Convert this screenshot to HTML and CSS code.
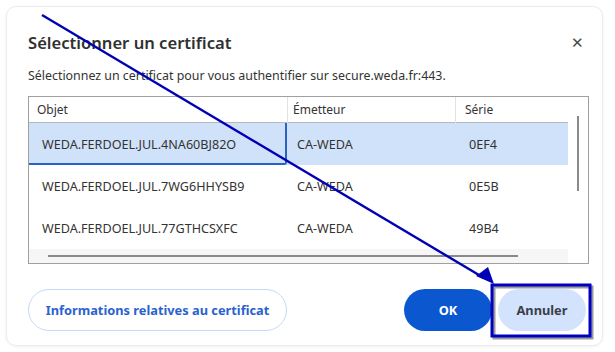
FILE: index.html
```html
<!DOCTYPE html>
<html lang="fr">
<head>
  <meta charset="UTF-8" />
  <title>Sélectionner un certificat</title>
  <link rel="stylesheet" href="styles.css">
</head>
<body>

  <!-- DIALOG -->
  <div class="dialog">
    <div class="dialog-head">
      <h1>Sélectionner un certificat</h1>
      <span class="close">&#x2715;</span>
    </div>
    <p class="intro">Sélectionnez un certificat pour vous authentifier sur secure.weda.fr:443.</p>

    <!-- CERTIFICATE LIST -->
    <div class="cert-list">
      <div class="cert-body">
        <div class="row head">
          <div class="cell">Objet</div>
          <div class="cell">Émetteur</div>
          <div class="cell">Série</div>
        </div>
        <div class="row selected">
          <div class="cell focus">WEDA.FERDOEL.JUL.4NA60BJ82O</div>
          <div class="cell">CA-WEDA</div>
          <div class="cell">0EF4</div>
        </div>
        <div class="row">
          <div class="cell">WEDA.FERDOEL.JUL.7WG6HHYSB9</div>
          <div class="cell">CA-WEDA</div>
          <div class="cell">0E5B</div>
        </div>
        <div class="row">
          <div class="cell">WEDA.FERDOEL.JUL.77GTHCSXFC</div>
          <div class="cell">CA-WEDA</div>
          <div class="cell">49B4</div>
        </div>
        <div class="hscroll"><span></span></div>
      </div>
      <div class="vscroll"><span></span></div>
    </div>

    <!-- ACTIONS -->
    <div class="actions">
      <button class="btn btn-outline">Informations relatives au certificat</button>
      <div class="actions-right">
        <button class="btn btn-primary">OK</button>
        <button class="btn btn-tonal">Annuler</button>
      </div>
    </div>
  </div>

  <!-- ANNOTATION (arrow + frame drawn over the screenshot) -->
  <svg class="annotation" width="615" height="352" viewBox="0 0 615 352">
    <line x1="42" y1="15" x2="484" y2="278" stroke="#0000b4" stroke-width="2.4"/>
    <polygon points="476,276 488,267 494,284" fill="#0000b4"/>
    <rect x="494" y="287" width="98" height="51" fill="none" stroke="#9a9a9a" stroke-width="3"/>
    <rect x="492" y="285" width="98" height="51" fill="none" stroke="#0000c4" stroke-width="3"/>
  </svg>

</body>
</html>
```

FILE: styles.css
```css
/* GLOBAL RESET */
*, *::before, *::after { box-sizing: border-box; margin: 0; padding: 0; }
body {
  width: 615px;
  height: 352px;
  padding: 6px 0 0 6px;
  background: #fff;
  font-family: 'Noto Sans', 'Open Sans', sans-serif;
  color: #333;
  overflow: hidden;
  position: relative;
}

/* DIALOG */
.dialog {
  width: 597px;
  height: 340px;
  border: 1px solid #ececec;
  border-radius: 10px;
  padding: 22px 14px 0 21px;
  box-shadow: 0 1px 3px rgba(0,0,0,0.06);
}
.dialog-head {
  display: flex;
  justify-content: space-between;
  align-items: center;
  height: 26px;
}
.dialog-head h1 {
  font-size: 16.6px;
  font-weight: 600;
  color: #303030;
}
.close {
  font-size: 15px;
  color: #4a4a4a;
  margin-right: 4px;
}
.intro {
  font-size: 12.4px;
  margin-top: 12px;
  color: #333;
}

/* CERTIFICATE LIST */
.cert-list {
  margin-top: 12px;
  width: 561px;
  height: 168px;
  border: 1px solid #a0a0a0;
  display: flex;
  font-size: 12px;
}
.cert-body {
  flex: 1;
  display: flex;
  flex-direction: column;
}
.row {
  display: grid;
  grid-template-columns: 258px 168px 1fr;
  height: 42px;
  align-items: center;
  font-size: 12.6px;
}
.row .cell { padding-left: 13px; white-space: nowrap; }
.row .cell:nth-child(2) { padding-left: 10px; }
.row .cell:nth-child(3) { padding-left: 14px; }
.row.head {
  height: 26px;
  font-size: 12px;
  border-bottom: 1px solid #b8b8b8;
}
.row.head .cell {
  padding-left: 8px;
  border-left: 1px solid #e2e2e2;
  line-height: 26px;
}
.row.head .cell:first-child { border-left: none; }
.row.head .cell:nth-child(2) { padding-left: 5px; }
.row.head .cell:nth-child(3) { padding-left: 9px; }
.row.selected { background: #d0e2f9; }
.cell.focus {
  height: 100%;
  display: flex;
  align-items: center;
  padding-top: 2px;
  border-right: 2px solid #2a63c4;
  border-bottom: 2px solid #2a63c4;
  border-bottom-right-radius: 3px;
}
.hscroll {
  flex: 1;
  background: #f6f6f6;
  display: flex;
  align-items: center;
  padding-left: 19px;
}
.hscroll span {
  width: 470px;
  height: 2px;
  background: #8a8a8a;
}
.vscroll {
  width: 20px;
  display: flex;
  justify-content: center;
  padding-top: 19px;
}
.vscroll span {
  width: 2px;
  height: 75px;
  background: #8a8a8a;
}

/* ACTIONS */
.actions {
  margin-top: 25px;
  width: 561px;
  display: flex;
  justify-content: space-between;
}
.actions-right { display: flex; gap: 6px; margin-right: 3px; }
.btn {
  height: 42px;
  border-radius: 21px;
  border: none;
  font-family: inherit;
  font-size: 12.8px;
  font-weight: 700;
}
.btn-outline {
  width: 259px;
  background: #fff;
  border: 1px solid #c6daf7;
  color: #2a62cf;
}
.btn-primary {
  width: 88px;
  background: #0b57d0;
  color: #fff;
}
.btn-tonal {
  width: 88px;
  background: #d3e3fd;
  color: #3a3f4a;
}

/* ANNOTATION */
.annotation {
  position: absolute;
  top: 0;
  left: 0;
  pointer-events: none;
}
```
